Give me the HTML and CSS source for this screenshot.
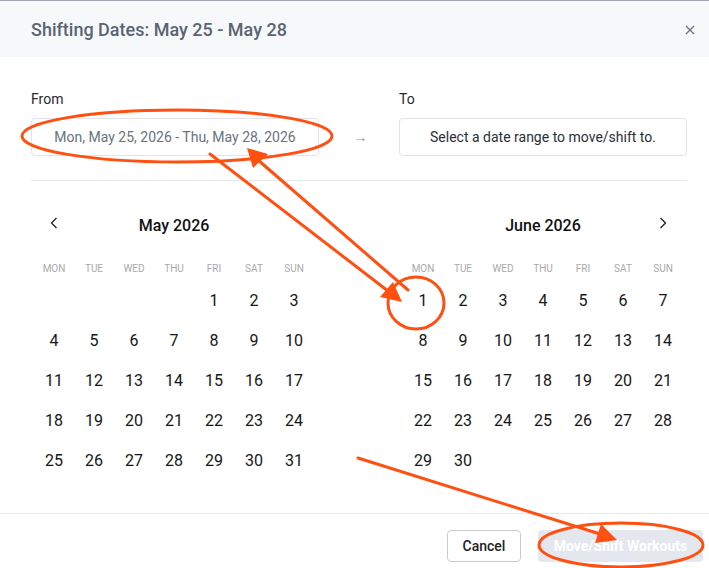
FILE: index.html
```html
<!DOCTYPE html>
<html>
<head>
<meta charset="utf-8">
<link rel="stylesheet" href="styles.css">
</head>
<body>
<div class="modal">
  <header class="modal-header">
    <h1 class="modal-title">Shifting Dates: May 25 - May 28</h1>
    <button class="close-btn" aria-label="Close">
      <svg width="10" height="10" viewBox="0 0 10 10"><path d="M1 1L9 9M9 1L1 9" stroke="#6b7789" stroke-width="1.4" fill="none"/></svg>
    </button>
  </header>
  <main class="modal-body">
    <div class="range-row">
      <div class="field">
        <label class="field-label">From</label>
        <div class="field-input muted">Mon, May 25, 2026 - Thu, May 28, 2026</div>
      </div>
      <div class="range-arrow">&rarr;</div>
      <div class="field">
        <label class="field-label">To</label>
        <div class="field-input">Select a date range to move/shift to.</div>
      </div>
    </div>
    <div class="divider"></div>
    <div class="calendars">
      <div class="calendar">
        <div class="cal-head">
          <span class="nav nav-prev"><svg width="8" height="12" viewBox="0 0 8 12"><path d="M6.5 1L1.5 6L6.5 11" stroke="#222" stroke-width="1.3" fill="none"/></svg></span>
          <span class="cal-title">May 2026</span>
          <span class="nav"></span>
        </div>
        <div class="cal-grid weekdays">
          <span>MON</span><span>TUE</span><span>WED</span><span>THU</span><span>FRI</span><span>SAT</span><span>SUN</span>
        </div>
        <div class="cal-grid days">
          <span></span><span></span><span></span><span></span><span>1</span><span>2</span><span>3</span>
          <span>4</span><span>5</span><span>6</span><span>7</span><span>8</span><span>9</span><span>10</span>
          <span>11</span><span>12</span><span>13</span><span>14</span><span>15</span><span>16</span><span>17</span>
          <span>18</span><span>19</span><span>20</span><span>21</span><span>22</span><span>23</span><span>24</span>
          <span>25</span><span>26</span><span>27</span><span>28</span><span>29</span><span>30</span><span>31</span>
        </div>
      </div>
      <div class="calendar">
        <div class="cal-head">
          <span class="nav"></span>
          <span class="cal-title">June 2026</span>
          <span class="nav nav-next"><svg width="8" height="12" viewBox="0 0 8 12"><path d="M1.5 1L6.5 6L1.5 11" stroke="#222" stroke-width="1.3" fill="none"/></svg></span>
        </div>
        <div class="cal-grid weekdays">
          <span>MON</span><span>TUE</span><span>WED</span><span>THU</span><span>FRI</span><span>SAT</span><span>SUN</span>
        </div>
        <div class="cal-grid days">
          <span>1</span><span>2</span><span>3</span><span>4</span><span>5</span><span>6</span><span>7</span>
          <span>8</span><span>9</span><span>10</span><span>11</span><span>12</span><span>13</span><span>14</span>
          <span>15</span><span>16</span><span>17</span><span>18</span><span>19</span><span>20</span><span>21</span>
          <span>22</span><span>23</span><span>24</span><span>25</span><span>26</span><span>27</span><span>28</span>
          <span>29</span><span>30</span>
        </div>
      </div>
    </div>
  </main>
  <footer class="modal-footer">
    <button class="btn btn-cancel">Cancel</button>
    <button class="btn btn-primary" disabled>Move/Shift Workouts</button>
  </footer>
  <svg class="annotations" width="709" height="568" viewBox="0 0 709 568">
    <g fill="none" stroke="#ff5012" stroke-width="3" stroke-linecap="round">
      <ellipse cx="177" cy="136" rx="155" ry="26"/>
      <line x1="210" y1="154" x2="388" y2="291"/>
      <line x1="408" y1="290" x2="258" y2="160"/>
      <ellipse cx="416" cy="303" rx="28" ry="26"/>
      <line x1="358" y1="458" x2="600" y2="534"/>
      <ellipse cx="621" cy="545" rx="82" ry="22"/>
    </g>
    <g fill="#ff5012">
      <polygon points="402,302 380,297 393,282"/>
      <polygon points="247,148 268,154 253,168"/>
      <polygon points="617,540 595,543 601,524"/>
    </g>
  </svg>
</div>
</body>
</html>
```

FILE: styles.css
```css
* { box-sizing: border-box; }
html, body { margin: 0; padding: 0; }
body {
  width: 709px;
  height: 568px;
  background: #fff;
  font-family: Roboto, "Liberation Sans", sans-serif;
  color: #1a1a1a;
  overflow: hidden;
}
.modal {
  position: relative;
  width: 709px;
  height: 568px;
  border-top: 1px solid #a3a6b2;
  display: flex;
  flex-direction: column;
}
.modal-header {
  height: 56px;
  background: #f7f8fa;
  display: flex;
  align-items: center;
  justify-content: space-between;
  padding: 0 14px 0 31px;
}
.modal-title {
  margin: 0;
  font-size: 18px;
  font-weight: 500;
  color: #5b6473;
  letter-spacing: 0;
}
.close-btn {
  border: 0;
  background: transparent;
  padding: 0;
  width: 10px;
  height: 10px;
  display: flex;
  margin-top: 1px;
}
.modal-body {
  flex: 1;
  padding: 32px 22px 0 31px;
}
.range-row {
  display: flex;
  align-items: flex-end;
}
.field {
  width: 288px;
  display: flex;
  flex-direction: column;
}
.field-label {
  font-size: 14px;
  line-height: 20px;
  color: #2a2a2a;
  margin-bottom: 9px;
}
.field-input {
  height: 38px;
  border: 1px solid #e1e3e8;
  border-radius: 4px;
  display: flex;
  align-items: center;
  justify-content: center;
  font-size: 14px;
  color: #2b2f36;
}
.field-input.muted { color: #6b7280; }
.range-arrow {
  width: 80px;
  height: 38px;
  display: flex;
  align-items: center;
  justify-content: center;
  color: #8a8f98;
  font-size: 14px;
  padding: 0 0 0 3px;
}
.divider {
  height: 1px;
  background: #e8e9ed;
  margin-top: 24px;
  width: 656px;
}
.calendars {
  display: flex;
  justify-content: space-between;
  width: 656px;
  padding: 0 4px 0 3px;
}
.calendar { width: 280px; }
.cal-head {
  margin-top: 28px;
  height: 32px;
  display: flex;
  align-items: center;
}
.nav {
  width: 40px;
  height: 32px;
  display: flex;
  align-items: center;
  justify-content: center;
  padding-bottom: 4px;
}
.cal-title {
  flex: 1;
  text-align: center;
  font-size: 16px;
  font-weight: 500;
  color: #111;
}
.cal-grid {
  display: grid;
  grid-template-columns: repeat(7, 40px);
}
.weekdays {
  margin-top: 15px;
  height: 24px;
  align-items: center;
}
.weekdays span {
  text-align: center;
  font-size: 10px;
  color: #a9a9a9;
  letter-spacing: 0;
}
.days span {
  height: 40px;
  display: flex;
  align-items: center;
  justify-content: center;
  font-size: 16px;
  color: #161616;
}
.modal-footer {
  height: 55px;
  border-top: 1px solid #e8e9ed;
  display: flex;
  justify-content: flex-end;
  align-items: flex-start;
  padding: 16px 6px 0 0;
  gap: 17px;
}
.btn {
  height: 32px;
  border-radius: 4px;
  font-family: Roboto, "Liberation Sans", sans-serif;
  font-size: 14px;
  cursor: pointer;
}
.btn-cancel {
  width: 74px;
  background: #fff;
  border: 1px solid #c9cbd0;
  color: #222;
  font-weight: 500;
}
.btn-primary {
  width: 165px;
  background: #e4e8ee;
  border: 0;
  color: #fff;
  font-weight: 700;
}
.annotations {
  position: absolute;
  left: 0;
  top: -1px;
  pointer-events: none;
}
```
